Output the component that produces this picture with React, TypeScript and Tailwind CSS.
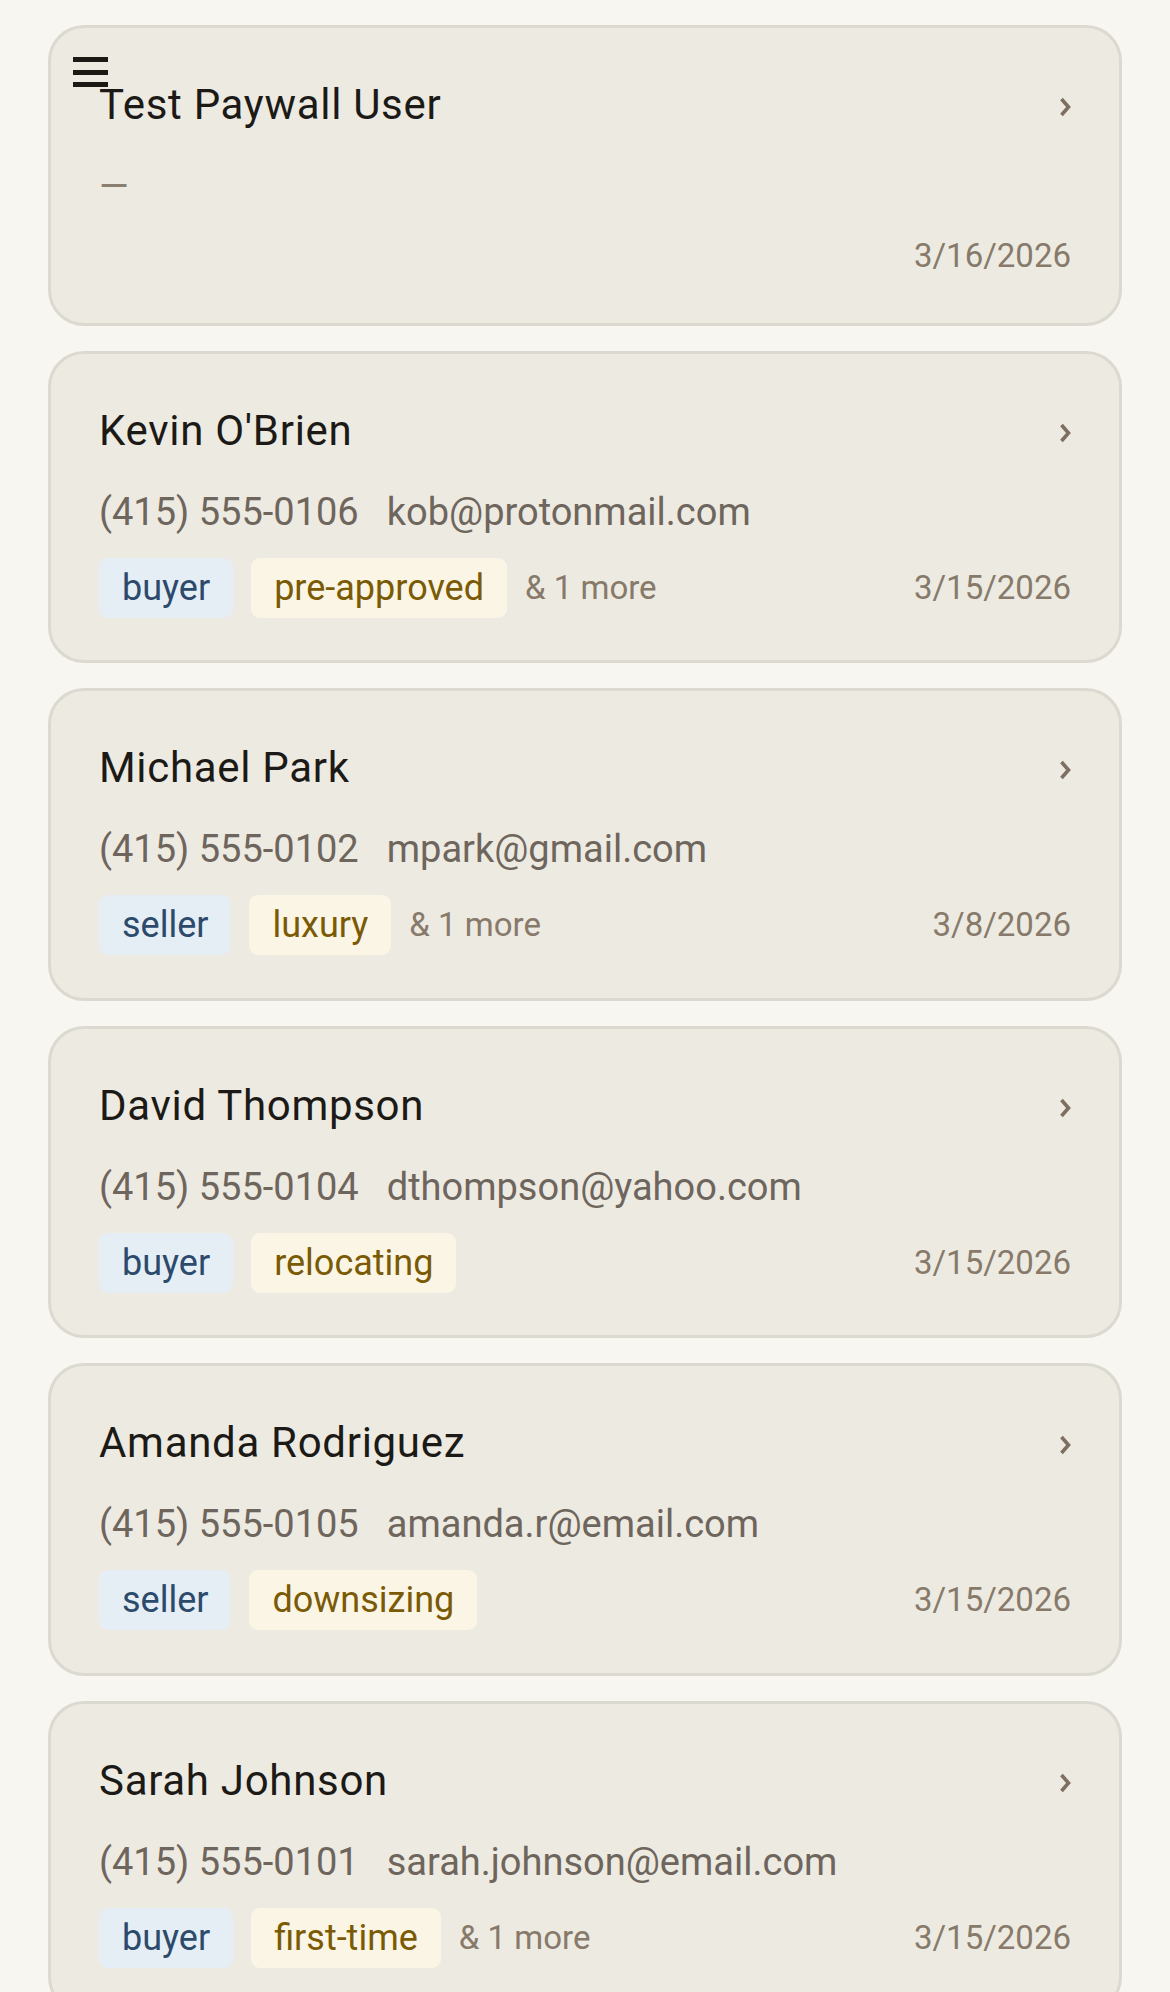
import React from "react";

type Tag = { label: string; kind: "role" | "detail" };
type Contact = {
  name: string;
  phone?: string;
  email?: string;
  tags: Tag[];
  more?: number;
  date: string;
};

const contacts: Contact[] = [
  { name: "Test Paywall User", tags: [], date: "3/16/2026" },
  {
    name: "Kevin O'Brien",
    phone: "(415) 555-0106",
    email: "kob@protonmail.com",
    tags: [
      { label: "buyer", kind: "role" },
      { label: "pre-approved", kind: "detail" },
    ],
    more: 1,
    date: "3/15/2026",
  },
  {
    name: "Michael Park",
    phone: "(415) 555-0102",
    email: "mpark@gmail.com",
    tags: [
      { label: "seller", kind: "role" },
      { label: "luxury", kind: "detail" },
    ],
    more: 1,
    date: "3/8/2026",
  },
  {
    name: "David Thompson",
    phone: "(415) 555-0104",
    email: "dthompson@yahoo.com",
    tags: [
      { label: "buyer", kind: "role" },
      { label: "relocating", kind: "detail" },
    ],
    date: "3/15/2026",
  },
  {
    name: "Amanda Rodriguez",
    phone: "(415) 555-0105",
    email: "amanda.r@email.com",
    tags: [
      { label: "seller", kind: "role" },
      { label: "downsizing", kind: "detail" },
    ],
    date: "3/15/2026",
  },
  {
    name: "Sarah Johnson",
    phone: "(415) 555-0101",
    email: "sarah.johnson@email.com",
    tags: [
      { label: "buyer", kind: "role" },
      { label: "first-time", kind: "detail" },
    ],
    more: 1,
    date: "3/15/2026",
  },
];

function Chevron() {
  return (
    <svg width="12" height="20" viewBox="0 0 12 20" className="mt-[4px] shrink-0">
      <polyline
        points="2.5,2 9.5,10 2.5,18"
        fill="none"
        stroke="#7d7060"
        strokeWidth="3.6"
        strokeLinecap="butt"
        strokeLinejoin="miter"
      />
    </svg>
  );
}

function ContactCard({ c }: { c: Contact }) {
  return (
    <div className="rounded-[36px] border-[3px] border-[#dcd9d0] bg-[#edeae2] px-[48px] pt-[47px] pb-[42.5px]">
      <div className="flex h-[60px] items-center justify-between">
        <span className="text-[42px] leading-[60px] tracking-[0.7px] text-[#1c1a16]">{c.name}</span>
        <Chevron />
      </div>
      <div className="mt-[24px] flex h-[54px] items-center gap-[28px] text-[38px] leading-[54px] text-[#6e655c]">
        {c.phone ? (
          <>
            <span>{c.phone}</span>
            <span>{c.email}</span>
          </>
        ) : (
          <span className="text-[#8a7f70]">—</span>
        )}
      </div>
      <div className="mt-[19px] flex min-h-[48px] items-center justify-between">
        <div className="flex items-center gap-[18px]">
          {c.tags.map((t) => (
            <span
              key={t.label}
              className={
                t.kind === "role"
                  ? "flex h-[60px] items-center rounded-[9px] bg-[#e6eef5] px-[23px] text-[36px] text-[#2c4a6b]"
                  : "flex h-[60px] items-center rounded-[9px] bg-[#fbf5e6] px-[23px] text-[36px] text-[#7a5a05]"
              }
            >
              {t.label}
            </span>
          ))}
          {c.more ? (
            <span className="text-[33px] text-[#877a6a]">&amp; {c.more} more</span>
          ) : null}
        </div>
        <span className="text-[33px] leading-[48px] text-[#877a6a]">{c.date}</span>
      </div>
    </div>
  );
}

export default function App() {
  return (
    <div
      className="min-h-screen bg-[#f8f6f1]"
      style={{ fontFamily: "Roboto, 'Noto Sans', sans-serif" }}
    >
      <div className="fixed left-[73px] top-[57px] z-10 flex w-[35px] flex-col gap-[7.5px]">
        <span className="block h-[5px] w-full bg-[#1c1915]" />
        <span className="block h-[5px] w-full bg-[#1c1915]" />
        <span className="block h-[5px] w-full bg-[#1c1915]" />
      </div>
      <div className="flex flex-col gap-[25px] px-[48px] pt-[25px] pb-[48px]">
        {contacts.map((c) => (
          <ContactCard key={c.name} c={c} />
        ))}
      </div>
    </div>
  );
}
